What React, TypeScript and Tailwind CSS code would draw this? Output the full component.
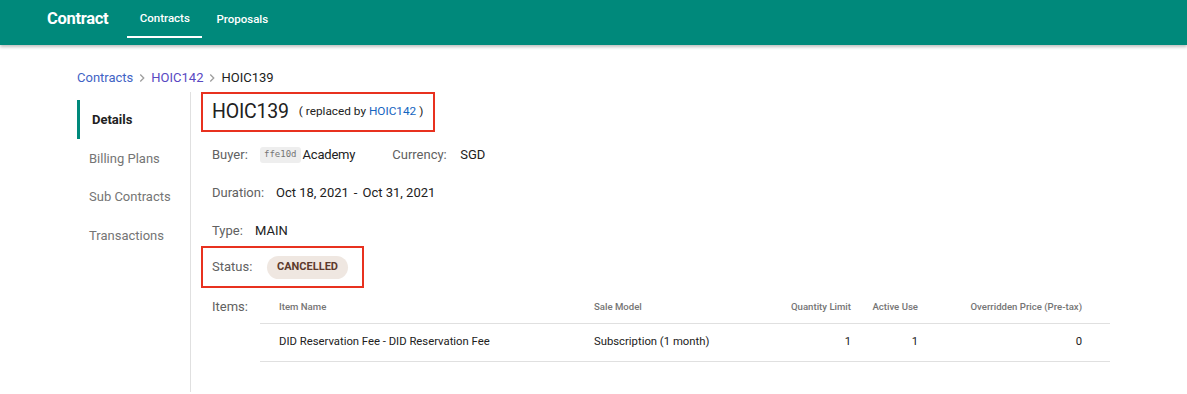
import React from "react";

const font = { fontFamily: "Roboto, 'Noto Sans', sans-serif" };

function Chevron() {
  return (
    <svg width="14" height="14" viewBox="0 0 24 24" className="mx-[2px] text-[#9e9e9e]">
      <path d="M9 6l6 6-6 6" fill="none" stroke="currentColor" strokeWidth="2.2" />
    </svg>
  );
}

export default function App() {
  return (
    <div className="w-[1187px] h-[394px] bg-white overflow-hidden" style={font}>
      <header className="h-[45px] bg-[#00897b] flex items-center text-white shadow-[0_2px_3px_rgba(0,0,0,0.25)] relative z-10">
        <div className="ml-[47px] text-[16.5px] font-bold tracking-[-0.3px] -mt-[6px]">Contract</div>
        <nav className="ml-[19px] flex h-full items-stretch">
          <div className="w-[75px] flex items-center justify-center text-[11.5px] font-medium border-b-2 border-white h-[38px] pt-[1px]">
            Contracts
          </div>
          <div className="w-[66px] ml-[7px] flex items-center justify-center text-[11.5px] font-medium h-[38px] pt-[1px]">
            Proposals
          </div>
        </nav>
      </header>

      <div className="pl-[77px] pt-[24px] flex items-center text-[13px] h-[18px] box-content">
        <span className="text-[#3f63c5]">Contracts</span>
        <Chevron />
        <span className="text-[#5848c2]">HOIC142</span>
        <Chevron />
        <span className="text-[#212121]">HOIC139</span>
      </div>

      <div className="flex mt-[5px] pl-[77px]">
        <aside className="w-[114px] border-r border-[#e0e0e0] h-[300px] pt-[8px] text-[13px]">
          <div className="h-[39px] border-l-[3px] border-[#00897b] pl-[12px] flex items-center font-bold text-[#212121]">
            Details
          </div>
          <div className="h-[38.5px] pl-[12px] flex items-center text-[#757575]">Billing Plans</div>
          <div className="h-[38.5px] pl-[12px] flex items-center text-[#757575]">Sub Contracts</div>
          <div className="h-[38.5px] pl-[12px] flex items-center text-[#757575]">Transactions</div>
        </aside>

        <main className="pl-[10px] flex-1">
          <div className="w-[234px] h-[40px] border-2 border-[#e8311f] flex items-center pl-[9px]">
            <span className="text-[19.5px] text-[#212121] tracking-[-0.2px]">HOIC139</span>
            <span className="ml-[10px] text-[11.8px] text-[#212121]">
              ( replaced by <span className="text-[#1565c0]">HOIC142</span> )
            </span>
          </div>

          <div className="pl-[11px] mt-[13px] h-[20px] flex items-center text-[13px]">
            <span className="text-[#616161] w-[48px]">Buyer:</span>
            <span className="bg-[#eeeeee] rounded-[3px] px-[4px] py-[1px] text-[9px] text-[#757575] mr-[2px]" style={{ fontFamily: "'DejaVu Sans Mono', monospace" }}>
              ffe10d
            </span>
            <span className="text-[#212121] tracking-[-0.2px]">Academy</span>
            <span className="text-[#616161] ml-[37px] w-[68px]">Currency:</span>
            <span className="text-[#212121]">SGD</span>
          </div>

          <div className="pl-[11px] mt-[18px] h-[20px] flex items-center text-[13px]">
            <span className="text-[#616161] w-[64px]">Duration:</span>
            <span className="text-[#212121]">Oct 18, 2021</span>
            <span className="text-[#212121] mx-[5px]">-</span>
            <span className="text-[#212121]">Oct 31, 2021</span>
          </div>

          <div className="pl-[11px] mt-[18px] h-[20px] flex items-center text-[13px]">
            <span className="text-[#616161] w-[43px]">Type:</span>
            <span className="text-[#212121]">MAIN</span>
          </div>

          <div className="mt-[5px] w-[163px] h-[42px] border-2 border-[#e8311f] flex items-center pl-[9px] text-[13px]">
            <span className="text-[#616161] w-[55px]">Status:</span>
            <span className="bg-[#efe7e1] text-[#5d3a2c] rounded-full h-[23px] px-[10px] flex items-center text-[11px] font-bold">
              CANCELLED
            </span>
          </div>

          <div className="flex mt-[8px] pl-[11px]">
            <div className="w-[48px] pt-[3px] text-[13px] leading-[16px] text-[#616161]">Items:</div>
            <table className="w-[850px] border-collapse table-fixed">
              <colgroup>
                <col className="w-[315px]" />
                <col className="w-[196px]" />
                <col className="w-[96px]" />
                <col className="w-[67px]" />
                <col className="w-[176px]" />
              </colgroup>
              <thead>
                <tr className="h-[27px] border-b border-[#e0e0e0] text-[9.6px] leading-[12px] text-[#757575]">
                  <th className="text-left font-medium pl-[19px] align-top pt-[5px]">Item Name</th>
                  <th className="text-left font-medium pl-[19px] align-top pt-[5px]">Sale Model</th>
                  <th className="text-right font-medium pr-[16px] align-top pt-[5px]">Quantity Limit</th>
                  <th className="text-right font-medium pr-[16px] align-top pt-[5px]">Active Use</th>
                  <th className="text-right font-medium pr-[28px] align-top pt-[5px]">Overridden Price (Pre-tax)</th>
                </tr>
              </thead>
              <tbody>
                <tr className="h-[38px] border-b border-[#e0e0e0] text-[11.3px] text-[#212121]">
                  <td className="pl-[19px]">DID Reservation Fee - DID Reservation Fee</td>
                  <td className="pl-[19px]">Subscription (1 month)</td>
                  <td className="text-right pr-[16px]">1</td>
                  <td className="text-right pr-[16px]">1</td>
                  <td className="text-right pr-[28px]">0</td>
                </tr>
              </tbody>
            </table>
          </div>
        </main>
      </div>
    </div>
  );
}
